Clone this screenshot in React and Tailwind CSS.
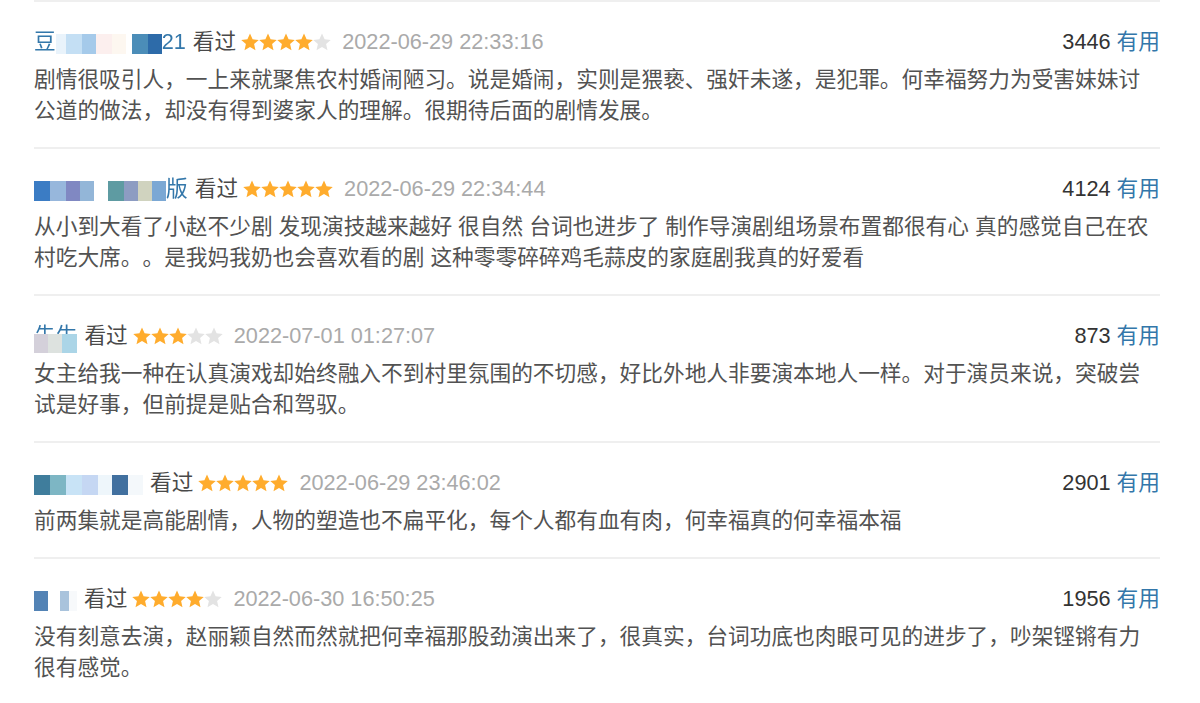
import React from 'react';

const reviews = [
  {
    name: [
      { t: '豆' },
      { c: '#e9f3fb', w: 10 },
      { c: '#c4dff4', w: 16 },
      { c: '#a5caea', w: 14 },
      { c: '#fcefee', w: 16 },
      { c: '#fdf7f0', w: 14 },
      { c: '#ffffff', w: 6 },
      { c: '#4b8db8', w: 16 },
      { c: '#2d6ba9', w: 14 },
      { t: '21' },
    ],
    stars: 4,
    date: '2022-06-29 22:33:16',
    votes: '3446',
    lines: [
      '剧情很吸引人，一上来就聚焦农村婚闹陋习。说是婚闹，实则是猥亵、强奸未遂，是犯罪。何幸福努力为受害妹妹讨',
      '公道的做法，却没有得到婆家人的理解。很期待后面的剧情发展。',
    ],
  },
  {
    name: [
      { c: '#3b7cc4', w: 16 },
      { c: '#97b7dc', w: 16 },
      { c: '#8088c2', w: 14 },
      { c: '#93b6d8', w: 14 },
      { c: '#ffffff', w: 14 },
      { c: '#5e9ba2', w: 16 },
      { c: '#8d9cc2', w: 14 },
      { c: '#d0d3bf', w: 14 },
      { c: '#7ba8d4', w: 14 },
      { t: '版' },
    ],
    stars: 5,
    date: '2022-06-29 22:34:44',
    votes: '4124',
    lines: [
      '从小到大看了小赵不少剧 发现演技越来越好 很自然 台词也进步了 制作导演剧组场景布置都很有心 真的感觉自己在农',
      '村吃大席。。是我妈我奶也会喜欢看的剧 这种零零碎碎鸡毛蒜皮的家庭剧我真的好爱看',
    ],
  },
  {
    name: [
      { c: '#d4d0da', w: 15 },
      { c: '#dde2df', w: 15 },
      { c: '#abd5e7', w: 16 },
    ],
    nameText: '先生',
    stars: 3,
    date: '2022-07-01 01:27:07',
    votes: '873',
    lines: [
      '女主给我一种在认真演戏却始终融入不到村里氛围的不切感，好比外地人非要演本地人一样。对于演员来说，突破尝',
      '试是好事，但前提是贴合和驾驭。',
    ],
  },
  {
    name: [
      { c: '#3f7d9c', w: 16 },
      { c: '#7db6c4', w: 16 },
      { c: '#c8e3f6', w: 16 },
      { c: '#c5d7f3', w: 16 },
      { c: '#eef6fb', w: 14 },
      { c: '#41709f', w: 16 },
      { c: '#f4f8fb', w: 15 },
    ],
    stars: 5,
    date: '2022-06-29 23:46:02',
    votes: '2901',
    lines: ['前两集就是高能剧情，人物的塑造也不扁平化，每个人都有血有肉，何幸福真的何幸福本福'],
  },
  {
    name: [
      { c: '#5383b5', w: 14 },
      { c: '#ffffff', w: 12 },
      { c: '#a9c3dc', w: 9 },
      { c: '#f7f9fb', w: 8 },
    ],
    stars: 4,
    date: '2022-06-30 16:50:25',
    votes: '1956',
    lines: [
      '没有刻意去演，赵丽颖自然而然就把何幸福那股劲演出来了，很真实，台词功底也肉眼可见的进步了，吵架铿锵有力',
      '很有感觉。',
    ],
  },
];

const Star = ({ on }) => (
  <svg width="18" height="18" viewBox="1.2 1.4 21.6 21" className="shrink-0">
    <path
      d="M12 1.8l3.1 6.9 7.4.7-5.6 5 1.7 7.4L12 17.9l-6.6 3.9 1.7-7.4-5.6-5 7.4-.7z"
      fill={on ? '#ffac2d' : '#e3e3e3'}
    />
  </svg>
);

const Name = ({ parts, text }) => {
  if (text) {
    // blurred short name: blue glyphs with a mosaic over the lower half
    return (
      <span className="relative inline-block text-[#3377aa] blur-[0.4px]">
        {text}
        <span className="absolute left-0 right-0 top-[14px] bottom-[-2px] flex">
          {parts.map((p, i) => (
            <span key={i} style={{ background: p.c, width: p.w }} className="h-full" />
          ))}
        </span>
      </span>
    );
  }
  return (
    <span className="inline-flex items-center text-[#3377aa] blur-[0.5px]">
      {parts.map((p, i) =>
        p.t ? (
          <span key={i}>{p.t}</span>
        ) : (
          <span key={i} style={{ background: p.c, width: p.w }} className="h-[20px] mt-[4px]" />
        )
      )}
    </span>
  );
};

const Review = ({ r }) => (
  <div className="border-t-2 border-[#efefef] pt-[24px] pb-[21px]">
    <div className="flex items-center justify-between h-[31px]">
      <div className="flex items-center">
        <Name parts={r.name} text={r.nameText} />
        <span className="ml-[7px] text-[#494949]">看过</span>
        <span className="ml-[5px] flex">
          {[0, 1, 2, 3, 4].map((i) => (
            <Star key={i} on={i < r.stars} />
          ))}
        </span>
        <span className="ml-[11px] text-[#aaaaaa]">{r.date}</span>
      </div>
      <div>
        <span className="text-[#333333]">{r.votes}</span>
        <span className="ml-[6px] text-[#3377aa]">有用</span>
      </div>
    </div>
    <div className="mt-[7px] text-[#525252] leading-[31px] whitespace-nowrap [text-spacing-trim:space-all]">
      {r.lines.map((l, i) => (
        <div key={i}>{l}</div>
      ))}
    </div>
  </div>
);

export default function App() {
  return (
    <div
      className="w-[1200px] h-[703px] overflow-hidden bg-white text-[21.7px] leading-[31px]"
      style={{ fontFamily: '"Liberation Sans", "Noto Sans CJK SC", sans-serif' }}
    >
      <div className="ml-[34px] w-[1126px]">
        {reviews.map((r, i) => (
          <Review key={i} r={r} />
        ))}
      </div>
    </div>
  );
}
